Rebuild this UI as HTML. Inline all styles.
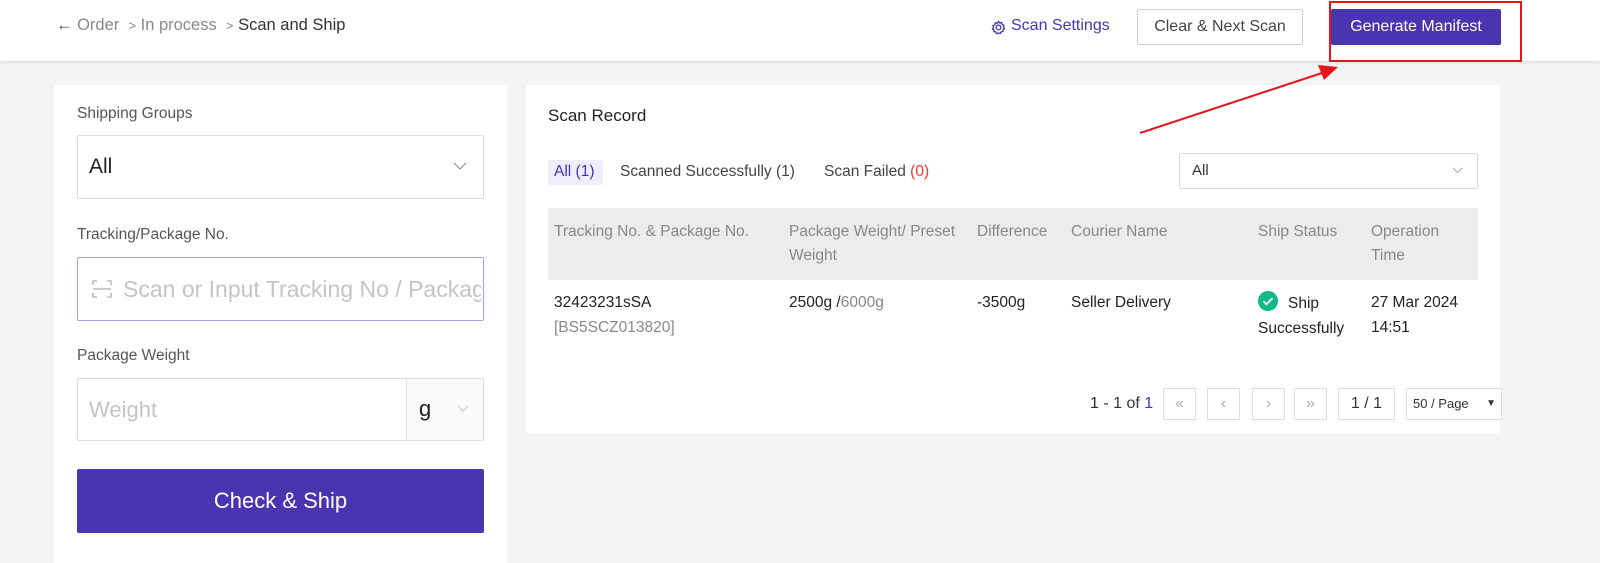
<!DOCTYPE html>
<html><head><meta charset="utf-8"><style>
*{box-sizing:border-box;margin:0;padding:0}
body{width:1600px;height:563px;overflow:hidden;background:#f4f4f5;font-family:"Liberation Sans",sans-serif;position:relative;color:#333}
.a{position:absolute;white-space:nowrap}
.hdr{position:absolute;left:0;top:0;width:1600px;height:61px;background:#fff;box-shadow:0 1px 4px rgba(0,0,0,.12)}
.card{position:absolute;background:#fff}
.lbl{font-size:15.5px;color:#555}
.box{position:absolute;border:1px solid #dcdcdc;border-radius:2px;background:#fff}
.th{font-size:15.5px;color:#888;line-height:24px}
.td{font-size:15.5px;color:#222;line-height:25px}
.pg{position:absolute;top:388px;height:32px;border:1px solid #ddd;background:#fff;color:#aaa;font-size:16px;text-align:center;line-height:30px}
</style></head><body>
<div class="hdr"></div>
<div class="a" style="left:56px;top:16px;font-size:16.5px;color:#888"><span style="color:#555">&#8592;</span> Order &nbsp;<span style="font-size:13px">&gt;</span> In process &nbsp;<span style="font-size:13px">&gt;</span> <span style="color:#333">Scan and Ship</span></div>
<svg class="a" style="left:991px;top:20px" width="15" height="15" viewBox="0 0 16 16" fill="none" stroke="#4a34b0" stroke-width="1.4"><circle cx="8" cy="8" r="2.5"/><path d="M8 1.5l1.3 1.6 2-.4.6 2 1.9.9-.6 2 1.2 1.6-1.7 1.2.1 2-2 .3-.9 1.9-2-.8-2 .8-.9-1.9-2-.3.1-2L1.5 9.6l1.2-1.6-.6-2 1.9-.9.6-2 2 .4z"/></svg>
<div class="a" style="left:1011px;top:17px;font-size:16px;color:#4a34b0">Scan Settings</div>
<div class="box" style="left:1137px;top:9px;width:166px;height:36px;border-color:#d0d0d0;text-align:center;line-height:34px;font-size:16px;color:#444">Clear &amp; Next Scan</div>
<div class="a" style="left:1331px;top:9px;width:170px;height:36px;background:#4a34b0;border-radius:2px;color:#fff;text-align:center;line-height:36px;font-size:16px">Generate Manifest</div>
<div class="a" style="left:1329px;top:1px;width:193px;height:61px;border:2px solid #e8141c"></div>

<div class="card" style="left:54px;top:85px;width:453px;height:478px"></div>
<div class="a lbl" style="left:77px;top:105px">Shipping Groups</div>
<div class="box" style="left:77px;top:135px;width:407px;height:64px"></div>
<div class="a" style="left:89px;top:155px;font-size:21px;color:#222">All</div>
<svg class="a" style="left:453px;top:162px" width="14" height="9"><path d="M1 1l6 6 6-6" fill="none" stroke="#999" stroke-width="1.3"/></svg>
<div class="a lbl" style="left:77px;top:226px">Tracking/Package No.</div>
<div class="box" style="left:77px;top:257px;width:407px;height:64px;border-color:#a99ee0"></div>
<svg class="a" style="left:92px;top:279px" width="20" height="20" fill="none" stroke="#bbb" stroke-width="1.6"><path d="M1 6V2h4M15 2h4v4M19 14v4h-4M5 18H1v-4M1 10h18"/></svg>
<div class="a" style="left:123px;top:276px;font-size:23px;color:#c4c4c4;width:358px;overflow:hidden">Scan or Input Tracking No / Package</div>
<div class="a lbl" style="left:77px;top:347px">Package Weight</div>
<div class="box" style="left:77px;top:378px;width:407px;height:63px"></div>
<div class="a" style="left:406px;top:379px;width:77px;height:61px;background:#fafafa;border-left:1px solid #e4e4e4"></div>
<div class="a" style="left:89px;top:397px;font-size:22px;color:#c4c4c4">Weight</div>
<div class="a" style="left:419px;top:396px;font-size:22px;color:#222">g</div>
<svg class="a" style="left:457px;top:405px" width="12" height="8"><path d="M1 1l5 5 5-5" fill="none" stroke="#ccc" stroke-width="1.2"/></svg>
<div class="a" style="left:77px;top:469px;width:407px;height:64px;background:#4a34b0;border-radius:2px;color:#fff;font-size:22px;text-align:center;line-height:64px">Check &amp; Ship</div>

<div class="card" style="left:526px;top:85px;width:974px;height:348px"></div>
<div class="a" style="left:548px;top:106px;font-size:17px;color:#222">Scan Record</div>
<div class="a" style="left:548px;top:160px;width:55px;height:25px;background:#efedfb;border-radius:2px"></div>
<div class="a" style="left:554px;top:163px;font-size:15.5px;color:#4a34b0">All (1)</div>
<div class="a" style="left:620px;top:163px;font-size:15.5px;color:#444">Scanned Successfully (1)</div>
<div class="a" style="left:824px;top:163px;font-size:15.5px;color:#444">Scan Failed <span style="color:#f33">(0)</span></div>
<div class="box" style="left:1179px;top:153px;width:299px;height:36px"></div>
<div class="a" style="left:1192px;top:162px;font-size:15px;color:#333">All</div>
<svg class="a" style="left:1452px;top:167px" width="11" height="7"><path d="M1 1l4.5 4.5L10 1" fill="none" stroke="#aaa" stroke-width="1.1"/></svg>
<div class="a" style="left:548px;top:208px;width:930px;height:72px;background:#ececec"></div>
<div class="a th" style="left:554px;top:220px">Tracking No. &amp; Package No.</div>
<div class="a th" style="left:789px;top:220px">Package Weight/ Preset<br>Weight</div>
<div class="a th" style="left:977px;top:220px">Difference</div>
<div class="a th" style="left:1071px;top:220px">Courier Name</div>
<div class="a th" style="left:1258px;top:220px">Ship Status</div>
<div class="a th" style="left:1371px;top:220px">Operation<br>Time</div>
<div class="a td" style="left:554px;top:290px">32423231sSA<br><span style="color:#888">[BS5SCZ013820]</span></div>
<div class="a td" style="left:789px;top:290px">2500g /<span style="color:#888">6000g</span></div>
<div class="a td" style="left:977px;top:290px">-3500g</div>
<div class="a td" style="left:1071px;top:290px">Seller Delivery</div>
<svg class="a" style="left:1258px;top:291px" width="20" height="20"><circle cx="10" cy="10" r="10" fill="#12b886"/><path d="M5.5 10.2l3 3 6-6" fill="none" stroke="#fff" stroke-width="1.8"/></svg>
<div class="a td" style="left:1258px;top:291px;line-height:25px"><span style="margin-left:30px">Ship</span><br>Successfully</div>
<div class="a td" style="left:1371px;top:290px">27 Mar 2024<br>14:51</div>
<div class="a" style="left:1090px;top:395px;font-size:16px;color:#333">1 - 1 of <span style="color:#4a34b0">1</span></div>
<div class="pg" style="left:1163px;width:33px">«</div>
<div class="pg" style="left:1207px;width:33px">‹</div>
<div class="pg" style="left:1252px;width:33px">›</div>
<div class="pg" style="left:1294px;width:33px">»</div>
<div class="pg" style="left:1338px;width:57px;color:#333">1 / 1</div>
<div class="pg" style="left:1406px;width:96px;color:#333;font-size:13px;text-align:left;padding-left:6px">50 / Page <span style="position:absolute;right:5px;font-size:10px">&#9660;</span></div>
<svg class="a" style="left:0;top:0" width="1600" height="563"><line x1="1140" y1="133" x2="1325" y2="72" stroke="#e8141c" stroke-width="2"/><polygon points="1338,67 1318,65 1324,80" fill="#e8141c"/></svg>
</body></html>
